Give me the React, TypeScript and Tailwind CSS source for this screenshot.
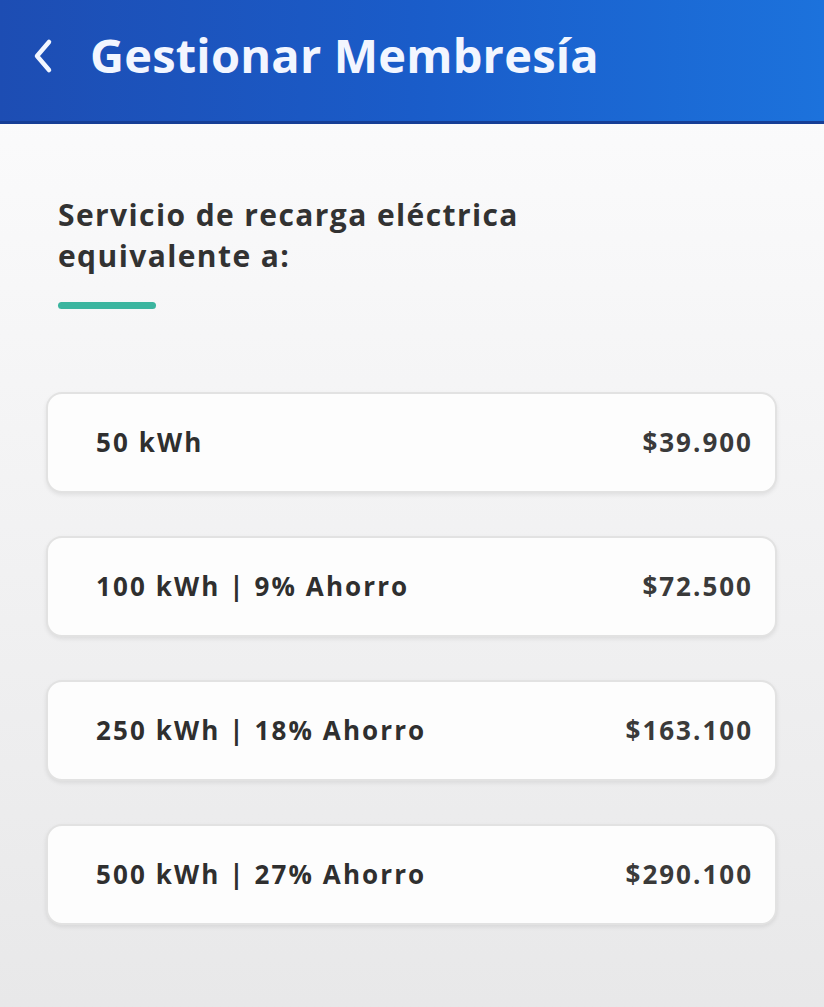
const plans = [
  { label: "50 kWh", price: "$39.900" },
  { label: "100 kWh | 9% Ahorro", price: "$72.500" },
  { label: "250 kWh | 18% Ahorro", price: "$163.100" },
  { label: "500 kWh | 27% Ahorro", price: "$290.100" },
];

export default function App() {
  return (
    <div
      className="w-[824px] h-[1007px] flex flex-col overflow-hidden bg-gradient-to-b from-[#fdfdfe] to-[#e8e8e9]"
      style={{ fontFamily: '"Open Sans", "Liberation Sans", sans-serif' }}
    >
      {/* Header */}
      <div className="h-[124px] shrink-0 flex items-center gap-[36px] pl-[32px] pb-[10px] bg-gradient-to-r from-[#1d4db3] via-[#1a5cc9] to-[#1c72dc] border-b-[3px] border-[#163e96]">
        <svg width="22" height="36" viewBox="0 0 22 36" fill="none">
          <path d="M17 4 L5 18 L17 32" stroke="#f2f6ff" strokeWidth="4.5" strokeLinecap="round" strokeLinejoin="round" />
        </svg>
        <h1 className="text-[47px] font-bold text-[#f2f6ff] tracking-[0.2px]">
          Gestionar Membresía
        </h1>
      </div>

      {/* Content */}
      <div className="flex-1 px-[46px] pt-[70px]">
        <p className="pl-[12px] text-[30px] leading-[41px] font-bold text-[#323232] tracking-[1.4px] w-[600px]">
          Servicio de recarga eléctrica
          <br />
          equivalente a:
        </p>
        <div className="ml-[12px] mt-[26px] w-[98px] h-[7px] rounded-full bg-[#3bb59f]" />

        <div className="mt-[83px] flex flex-col gap-[43px] w-[731px]">
          {plans.map((p) => (
            <div
              key={p.label}
              className="h-[101px] flex items-center justify-between pl-[48px] pr-[22px] rounded-[16px] bg-[#fdfdfd] border-[2px] border-[#e2e2e2] shadow-[0_2px_4px_rgba(0,0,0,0.08)]"
            >
              <span className="text-[26px] font-bold text-[#2f2f2f] tracking-[2.1px]">{p.label}</span>
              <span className="text-[26px] font-bold text-[#3a3a3a] tracking-[2px]">{p.price}</span>
            </div>
          ))}
        </div>
      </div>
    </div>
  );
}
